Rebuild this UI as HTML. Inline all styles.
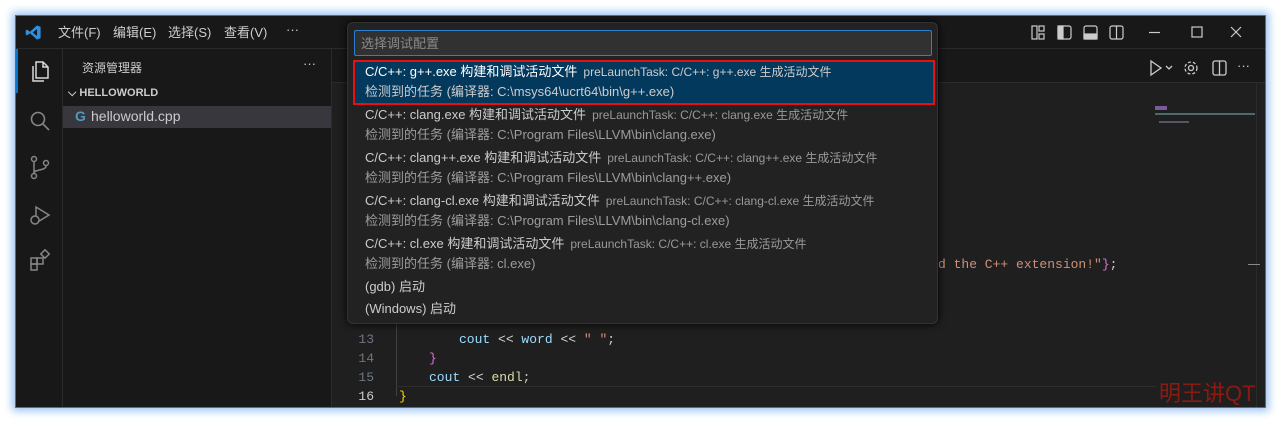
<!DOCTYPE html>
<html><head><meta charset="utf-8"><style>
*{margin:0;padding:0;box-sizing:border-box}
body{width:1280px;height:422px;background:#fff;position:relative;overflow:hidden;font-family:"Liberation Sans","Noto Sans CJK SC",sans-serif;}
.win{position:absolute;left:15px;top:15px;width:1251px;height:393px;background:#1f1f1f;box-shadow:0 0 8px 3px #9cc4f4;border:1px solid #3a6fc4;overflow:hidden}
.title{position:absolute;left:0;top:0;right:0;height:33px;background:#181818;border-bottom:1px solid #2b2b2b;color:#ccc;font-size:13px}
.menu{position:absolute;top:6px}
.act{position:absolute;left:0;top:33px;width:47px;bottom:0;background:#181818;border-right:1px solid #2b2b2b}
.side{position:absolute;left:47px;top:33px;width:269px;bottom:0;background:#181818;border-right:1px solid #2b2b2b;color:#ccc}
.tabs{position:absolute;left:316px;top:33px;right:0;height:34px;background:#181818;border-bottom:1px solid #2b2b2b}
.code{position:absolute;font-family:"Liberation Mono","DejaVu Sans Mono",monospace;font-size:13px;color:#9cdcfe;white-space:pre}
.ln{position:absolute;left:340px;width:18px;text-align:right;font-family:"Liberation Mono",monospace;font-size:13px;color:#6e7681}
.qp{position:absolute;left:331px;top:6px;width:591px;height:302px;background:#222;border:1px solid #333;border-radius:6px;box-shadow:0 0 8px #000}
.inp{position:absolute;left:6px;top:7px;width:578px;height:26px;background:#313131;border:1px solid #2f7fd0;border-radius:2px;color:#8a8a8a;font-size:13px;padding:2px 0 0 6px}
.it{position:absolute;left:17px;font-size:13px;color:#ccc;white-space:nowrap}
.it small{font-size:12px;color:#999;margin-left:6px}
.sub{color:#9d9d9d}
</style></head><body>
<div class="win">
 <div class="title">
  <svg style="position:absolute;left:9px;top:8px" width="17" height="17" viewBox="0 0 24 24"><path d="M17 2 7 11 3 8 1 9v6l2 1 4-3 10 9 5-2V4z M17 7v10l-6-5z" fill="#2f8fdf" fill-rule="evenodd"/></svg>
  <span class="menu" style="left:42px">文件(F)</span><span class="menu" style="left:97px">编辑(E)</span><span class="menu" style="left:152px">选择(S)</span><span class="menu" style="left:208px">查看(V)</span><span class="menu" style="left:270px;top:6px">···</span>
  <svg style="position:absolute;left:1015px;top:9px" width="180" height="16" fill="none" stroke="#ccc" stroke-width="1.2">
   <rect x="1" y="1" width="5" height="13"/><rect x="8" y="1" width="5" height="5"/><rect x="8" y="9" width="5" height="5"/>
   <rect x="27" y="1" width="13" height="13" rx="2"/><rect x="27" y="1" width="5" height="13" fill="#ccc"/>
   <rect x="53" y="1" width="13" height="13" rx="2"/><rect x="53" y="9" width="13" height="5" fill="#ccc"/>
   <rect x="79" y="1" width="13" height="13" rx="2"/><line x1="85.5" y1="1" x2="85.5" y2="14"/>
   <line x1="118" y1="7.5" x2="129" y2="7.5"/><rect x="161" y="2" width="10" height="10"/>
  </svg>
  <svg style="position:absolute;left:1214px;top:10px" width="12" height="12" stroke="#ccc" stroke-width="1.2"><path d="M1 1 11 11M11 1 1 11"/></svg>
 </div>
 <div class="act">
  <div style="position:absolute;left:0;top:0;width:2px;height:44px;background:#0078d4"></div>
  <svg style="position:absolute;left:12px;top:10px" width="24" height="24" fill="none" stroke="#d7d7d7" stroke-width="1.5"><path d="M8 3h7l5 5v11H8z M15 3v5h5 M5 7v15h11"/></svg>
  <svg style="position:absolute;left:12px;top:60px" width="24" height="24" fill="none" stroke="#868686" stroke-width="1.6"><circle cx="10" cy="10" r="6.5"/><path d="M15 15l6 6"/></svg>
  <svg style="position:absolute;left:12px;top:106px" width="24" height="26" fill="none" stroke="#868686" stroke-width="1.5"><circle cx="6" cy="4" r="2.5"/><circle cx="6" cy="21" r="2.5"/><circle cx="18" cy="8" r="2.5"/><path d="M6 7v11M18 11c0 5-12 3-12 7"/></svg>
  <svg style="position:absolute;left:12px;top:154px" width="24" height="24" fill="none" stroke="#868686" stroke-width="1.5"><path d="M8 4l13 8-13 8z"/><circle cx="7" cy="17" r="4" fill="#181818"/></svg>
  <svg style="position:absolute;left:12px;top:200px" width="24" height="24" fill="none" stroke="#868686" stroke-width="1.5"><rect x="3" y="9" width="6" height="6"/><rect x="9" y="9" width="6" height="6"/><rect x="3" y="15" width="6" height="6"/><rect x="14" y="2" width="6" height="6" transform="rotate(45 17 5)"/></svg>
 </div>
 <div class="side">
  <div style="position:absolute;left:19px;top:10px;font-size:12px">资源管理器</div>
  <div style="position:absolute;left:240px;top:7px;font-size:13px">···</div>
  <div style="position:absolute;left:5px;top:38px;font-size:11px;font-weight:bold">⌵ HELLOWORLD</div>
  <div style="position:absolute;left:0;top:57px;width:268px;height:22px;background:#37373d"></div>
  <div style="position:absolute;left:12px;top:59px;font-size:14px;color:#519aba;font-weight:bold">G</div>
  <div style="position:absolute;left:28px;top:59px;font-size:14px;color:#ccc">helloworld.cpp</div>
 </div>
 <div class="tabs">
  <svg style="position:absolute;left:814px;top:10px" width="110" height="18" fill="none" stroke="#ccc" stroke-width="1.3">
   <path d="M5 2l10 7-10 7z"/><path d="M20 7l3 3 3-3"/>
   <circle cx="45" cy="9" r="2.5"/><circle cx="45" cy="9" r="6" stroke-dasharray="3 2"/>
   <rect x="67" y="2" width="13" height="14" rx="2"/><line x1="73.5" y1="2" x2="73.5" y2="16"/>
  </svg>
  <div style="position:absolute;left:905px;top:9px;color:#ccc;font-size:13px">···</div>
 </div>
 <div style="position:absolute;left:1139px;top:90px;width:12px;height:4px;background:#7a5a9a"></div>
 <div style="position:absolute;left:1139px;top:97px;width:100px;height:2px;background:#4a6a70"></div>
 <div style="position:absolute;left:1143px;top:105px;width:30px;height:2px;background:#556"></div>
 <div style="position:absolute;left:1240px;top:67px;width:1px;height:326px;background:#2b2b2b"></div>
 <div style="position:absolute;left:1232px;top:248px;width:12px;height:1px;background:#888"></div>
 <div class="code" style="left:922px;top:241px;color:#ce9178">d the C++ extension!"<span style="color:#da70d6">}</span><span style="color:#ccc">;</span></div>
 <div class="ln" style="top:316px">13</div><div class="ln" style="top:335px">14</div><div class="ln" style="top:354px">15</div><div class="ln" style="top:373px;color:#ccc">16</div>
 <div style="position:absolute;left:380px;top:300px;width:1px;height:80px;background:#404040"></div>
 <div class="code" style="left:443px;top:316px">cout <span style="color:#d4d4d4">&lt;&lt;</span> word <span style="color:#d4d4d4">&lt;&lt;</span> <span style="color:#ce9178">" "</span><span style="color:#ccc">;</span></div>
 <div class="code" style="left:413px;top:335px;color:#da70d6">}</div>
 <div class="code" style="left:413px;top:354px">cout <span style="color:#d4d4d4">&lt;&lt;</span> <span style="color:#dcdcaa">endl</span><span style="color:#ccc">;</span></div>
 <div class="code" style="left:383px;top:373px;color:#ffd700">}</div>
 <div style="position:absolute;left:380px;top:370px;width:760px;height:1px;background:#2e2e2e"></div>
 <div style="position:absolute;left:1143px;top:360px;font-size:22px;color:#8b1a12">明王讲QT</div>
 <div class="qp">
  <div class="inp">选择调试配置</div>
  <div style="position:absolute;left:5px;top:37px;width:582px;height:45px;background:#04395e;border:2px solid #e81010"></div>
  <div class="it" style="top:38px;color:#fff">C/C++: g++.exe 构建和调试活动文件<small style="color:#ccc">preLaunchTask: C/C++: g++.exe 生成活动文件</small></div>
  <div class="it sub" style="top:58px;color:#ccc">检测到的任务 (编译器: C:\msys64\ucrt64\bin\g++.exe)</div>
  <div class="it" style="top:81px">C/C++: clang.exe 构建和调试活动文件<small>preLaunchTask: C/C++: clang.exe 生成活动文件</small></div>
  <div class="it sub" style="top:101px">检测到的任务 (编译器: C:\Program Files\LLVM\bin\clang.exe)</div>
  <div class="it" style="top:124px">C/C++: clang++.exe 构建和调试活动文件<small>preLaunchTask: C/C++: clang++.exe 生成活动文件</small></div>
  <div class="it sub" style="top:144px">检测到的任务 (编译器: C:\Program Files\LLVM\bin\clang++.exe)</div>
  <div class="it" style="top:167px">C/C++: clang-cl.exe 构建和调试活动文件<small>preLaunchTask: C/C++: clang-cl.exe 生成活动文件</small></div>
  <div class="it sub" style="top:187px">检测到的任务 (编译器: C:\Program Files\LLVM\bin\clang-cl.exe)</div>
  <div class="it" style="top:210px">C/C++: cl.exe 构建和调试活动文件<small>preLaunchTask: C/C++: cl.exe 生成活动文件</small></div>
  <div class="it sub" style="top:230px">检测到的任务 (编译器: cl.exe)</div>
  <div class="it" style="top:253px">(gdb) 启动</div>
  <div class="it" style="top:275px">(Windows) 启动</div>
 </div>
</div>
</body></html>
